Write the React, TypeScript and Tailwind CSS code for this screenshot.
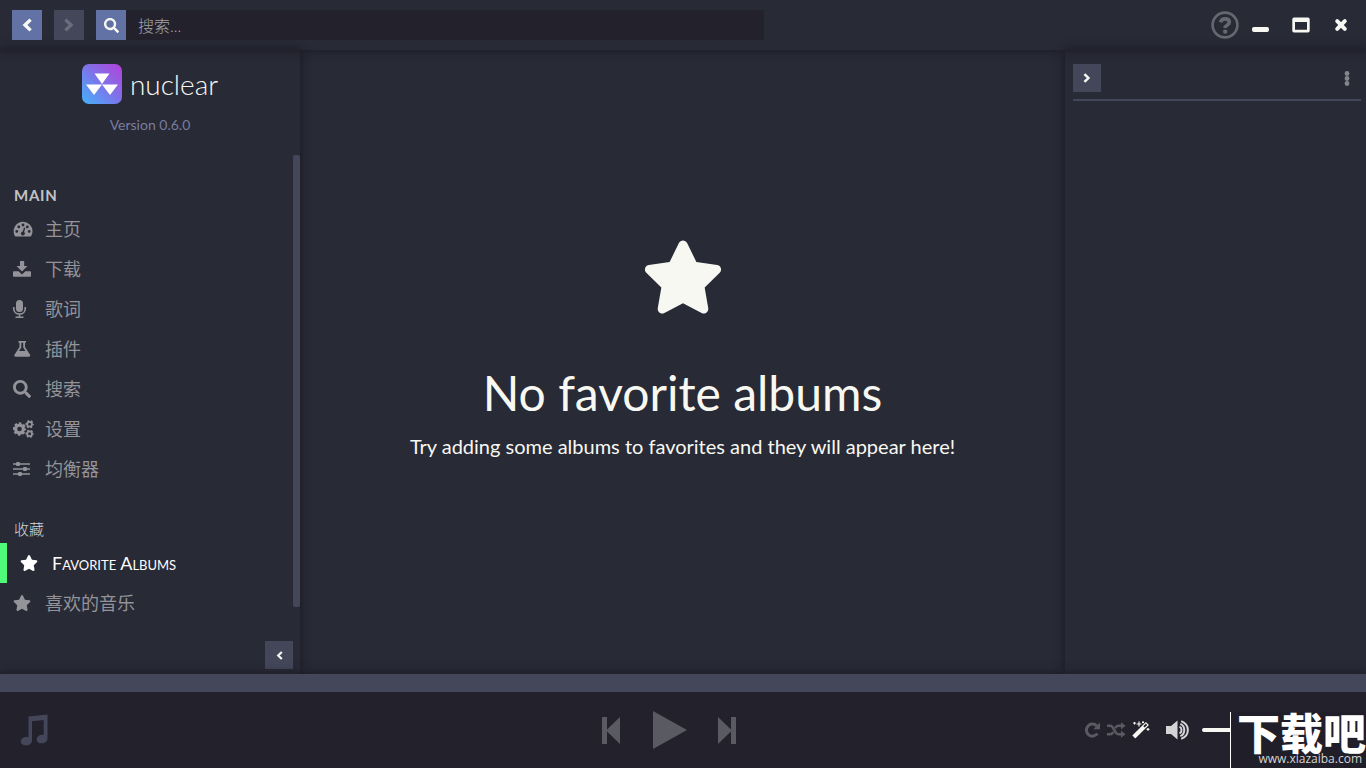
import React from 'react';
import { FaSearch, FaStar } from 'react-icons/fa';

const mainLinks = [
  { label: '主页', icon: <DashboardIcon /> },
  { label: '下载', icon: <DownloadIcon /> },
  { label: '歌词', icon: <MicrophoneIcon /> },
  { label: '插件', icon: <FlaskIcon /> },
  { label: '搜索', icon: <FaSearch size={18} /> },
  { label: '设置', icon: <CogsIcon /> },
  { label: '均衡器', icon: <SlidersIcon /> },
];

export default function App() {
  return (
    <div className="flex min-h-screen flex-col bg-[#282a36] font-['Lato','Noto_Sans_CJK_SC',sans-serif] text-[#f8f8f2]">
      <TopBar />
      <div className="flex flex-1">
        <Sidebar />
        <EmptyFavorites />
        <QueuePanel />
      </div>
      <Player />
    </div>
  );
}

function TopBar() {
  return (
    <header className="relative z-20 flex h-[50px] items-center pr-[15px] pl-3 shadow-[0_0_8px_1px_#1c1b25]">
      <button aria-label="Back" className="flex size-[30px] items-center justify-center bg-[#6272a4]">
        <Chevron direction="left" size={14} />
      </button>
      <button aria-label="Forward" disabled className="ml-3 flex size-[30px] items-center justify-center bg-[#44475a] text-[#6b6d7a]">
        <Chevron direction="right" size={14} />
      </button>
      <form className="ml-3 flex w-[668px]">
        <button type="button" aria-label="Search" className="flex size-[30px] shrink-0 items-center justify-center bg-[#6272a4]">
          <FaSearch size={15} />
        </button>
        <input
          type="text"
          aria-label="搜索"
          placeholder="搜索..."
          className="h-[30px] min-w-0 flex-1 bg-[#22212c] px-3 text-base font-light placeholder:text-[#a3a3a8] focus:outline-none"
        />
      </form>

      <div className="ml-auto flex items-center">
        <button aria-label="Help" className="text-[#66676f]">
          <svg width="28" height="28" viewBox="0 0 28 28" fill="none" stroke="currentColor">
            <circle cx="14" cy="14" r="12.4" strokeWidth="2.6" />
            <path d="M9.600 11.400c.5-2.300 2.100-3.500 4.500-3.500 2.500 0 4.200 1.200 4.200 3.300 0 3-4.100 2.700-4.100 5.700" strokeWidth="3.600" />
            <circle cx="14.200" cy="20.600" r="2.200" fill="currentColor" stroke="none" />
          </svg>
        </button>
        <button aria-label="Minimize" className="ml-3 flex w-5 justify-center">
          <svg width="18" height="16" viewBox="0 0 18 16" fill="currentColor">
            <rect x="0" y="10" width="17" height="5" rx="2" />
          </svg>
        </button>
        <button aria-label="Maximize" className="ml-5 flex w-5 justify-center">
          <svg width="18" height="16" viewBox="0 0 18 16" fill="currentColor" fillRule="evenodd">
            <path d="M2 .5h14A1.7 1.7 0 0 1 17.700 2.200v11.600a1.700 1.700 0 0 1-1.700 1.700H2a1.700 1.700 0 0 1-1.700-1.700V2.200A1.700 1.700 0 0 1 2 .5ZM3 5v7.700h12V5Z" />
          </svg>
        </button>
        <button aria-label="Close" className="ml-5 flex w-5 justify-center">
          <svg width="14" height="14" viewBox="0 0 14 14" fill="none" stroke="currentColor" strokeWidth="4" strokeLinecap="round">
            <path d="m3.200 3.200 7.600 7.600M10.800 3.200l-7.600 7.600" />
          </svg>
        </button>
      </div>
    </header>
  );
}

function Sidebar() {
  return (
    <aside className="flex w-[300px] shrink-0 flex-col shadow-[0_0_8px_1px_#1c1b25]">
      <div className="flex items-center justify-center gap-2 pt-3.5">
        <LogoMark />
        <span className="text-[28px]/[40px] font-light">nuclear</span>
      </div>
      <p className="mt-2.5 text-center text-sm/[22px] text-[#7a7c9e]">Version 0.6.0</p>

      <div className="mt-[19px] flex flex-1">
        <nav className="flex-1 pt-[30px]">
          <h2 className="px-3.5 text-[15px]/[20px] font-bold tracking-wider text-[#c3c3c6]">MAIN</h2>
          <ul className="mt-1">
            {mainLinks.map((link) => (
              <SidebarItem key={link.label} icon={link.icon} label={link.label} />
            ))}
          </ul>
          <h2 className="mt-[30px] px-3.5 text-[15px]/[20px] font-light text-[#d6d6d6]">收藏</h2>
          <ul className="mt-1">
            <SidebarItem icon={<FaStar size={18} />} label="Favorite Albums" active />
            <SidebarItem icon={<FaStar size={18} />} label="喜欢的音乐" />
          </ul>
        </nav>
        <div className="mb-4 w-[7px] rounded-xs bg-[#44475a]" />
      </div>

      <div className="flex justify-end pt-[18px] pr-[7px] pb-[5px]">
        <button aria-label="Collapse sidebar" className="flex size-7 items-center justify-center bg-[#44475a]">
          <Chevron direction="left" size={9} />
        </button>
      </div>
    </aside>
  );
}

function SidebarItem({ icon, label, active = false }: { icon: React.ReactNode; label: string; active?: boolean }) {
  return (
    <li>
      <a
        href="#"
        className={`flex h-10 items-center pl-[13px] text-lg [font-variant:small-caps] ${
          active ? 'border-l-7 border-[#50fa7b] text-white' : 'text-[#939399]'
        }`}
      >
        <span className="flex w-8 items-center">{icon}</span>
        {label}
      </a>
    </li>
  );
}

function EmptyFavorites() {
  return (
    <main className="flex flex-1 flex-col items-center justify-center pb-7 text-center">
      <FaStar size={82} />
      <h1 className="mt-12 text-5xl/[54px]">No favorite albums</h1>
      <p className="mt-3 text-xl">Try adding some albums to favorites and they will appear here!</p>
    </main>
  );
}

function QueuePanel() {
  return (
    <aside className="w-[301px] shrink-0 pt-3.5 pr-[5px] pl-2 shadow-[0_0_8px_1px_#1c1b25]">
      <div className="flex items-center justify-between border-b-2 border-[#44475a] pb-[7px]">
        <button aria-label="Collapse queue" className="flex size-7 items-center justify-center bg-[#44475a]">
          <Chevron direction="right" size={10} />
        </button>
        <button aria-label="Queue menu" className="flex size-7 items-center justify-center text-[#85868c]">
          <svg width="6" height="16" viewBox="0 0 6 16" fill="currentColor">
            <circle cx="3" cy="3.500" r="2.400" />
            <circle cx="3" cy="8.500" r="2.400" />
            <circle cx="3" cy="13.500" r="2.400" />
          </svg>
        </button>
      </div>
    </aside>
  );
}

function Player() {
  return (
    <footer className="relative z-20 bg-[#22212c] shadow-[0_0_8px_1px_#1c1b25]">
      <div className="h-[18px] bg-[#44475a]" />
      <div className="grid h-[76px] grid-cols-[1fr_auto_1fr]">
        <div className="flex items-center pl-5 text-[#44475a]">
          <svg width="28" height="32" viewBox="0 0 28 32" fill="currentColor" fillRule="evenodd">
            <path d="M8.500 2.500 27.500.5V24.500c0 3-2.500 4.800-5.600 4.800-3 0-5.200-1.400-5.200-3.900 0-2.700 2.700-4.700 5.600-4.700.6 0 1 .1 1.400.2V6L12 7.200v19.300c0 3-2.700 4.900-5.900 4.900C3.200 31.400.8 30 .8 27.500c0-2.600 2.600-4.600 5.600-4.600.8 0 1.500.1 2.100.3Z" />
          </svg>
        </div>

        <div className="flex items-center gap-[31px] pr-7 text-[#5a5a63]">
          <button aria-label="Previous">
            <svg width="18" height="27" viewBox="0 0 18 27" fill="currentColor">
              <path d="M0 0h5v12.500L18 0v27L5 14.500V27H0Z" />
            </svg>
          </button>
          <button aria-label="Play">
            <svg width="36" height="38" viewBox="0 0 36 38" fill="currentColor">
              <path d="M2 0 36 19 2 38Z" />
            </svg>
          </button>
          <button aria-label="Next">
            <svg width="18" height="27" viewBox="0 0 18 27" fill="currentColor">
              <path d="M18 0h-5v12.500L0 0v27L13 14.500V27h5Z" />
            </svg>
          </button>
        </div>

        <div className="flex items-center justify-end">
          <div className="flex items-center gap-1.5 text-[#5a5a63]">
            <button aria-label="Repeat"><RepeatIcon /></button>
            <button aria-label="Shuffle"><ShuffleIcon /></button>
            <button aria-label="Autoradio" className="text-[#f8f8f2]"><WandIcon /></button>
          </div>
          <button aria-label="Mute" className="ml-4 text-[#d5d5d5]">
            <VolumeIcon />
          </button>
          <input
            type="range"
            aria-label="Volume"
            defaultValue={100}
            className="ml-3 h-1 w-7 appearance-none rounded-l-full bg-[#f8f8f2] [&::-webkit-slider-thumb]:size-1 [&::-webkit-slider-thumb]:appearance-none"
          />
          <Watermark />
        </div>
      </div>
    </footer>
  );
}

function Watermark() {
  return (
    <div className="flex w-[136px] flex-col items-end self-end border-l border-white bg-[#1f1e29] text-white">
      <span className="font-['Noto_Sans_CJK_SC',sans-serif] text-[43px]/[38px] font-black">下载吧</span>
      <span className="pr-1 font-['Open_Sans',sans-serif] text-xs/[18px] text-[#d5d5d5]">www.xiazaiba.com</span>
    </div>
  );
}

function LogoMark() {
  return (
    <svg width="40" height="40" viewBox="0 0 40 40">
      <defs>
        <linearGradient id="logoFill" x1="0" y1="1" x2="1" y2="0">
          <stop offset="0" stopColor="#45b3fb" />
          <stop offset="0.5" stopColor="#7c75ea" />
          <stop offset="1" stopColor="#b53fd9" />
        </linearGradient>
      </defs>
      <rect width="40" height="40" rx="7" fill="url(#logoFill)" />
      <path d="M12.500 9.500h15L20 20ZM4 20.500h16l-8 10.500ZM20 20.500h16l-8 10.500Z" fill="#fff" />
    </svg>
  );
}

/* Icons */

function Chevron({ direction, size }: { direction: 'left' | 'right'; size: number }) {
  return (
    <svg width={size} height={size} viewBox="0 0 14 14" fill="none" stroke="currentColor" strokeWidth="3.400">
      <path d={direction === 'left' ? 'M10.600 1.600 5 7l5.600 5.400' : 'M3.400 1.600 9 7l-5.600 5.400'} />
    </svg>
  );
}

function DashboardIcon() {
  return (
    <svg width="20" height="16" viewBox="0 0 20 16" fill="currentColor">
      <path
        fillRule="evenodd"
        d="M10 .8a9.500 9.500 0 0 1 9.500 9.500c0 1.700-.5 3.300-1.300 4.600-.2.300-.5.500-.8.500H2.600c-.3 0-.6-.2-.8-.5A9.500 9.500 0 0 1 10 .8ZM3.800 9a1.400 1.400 0 1 0 0 2.800 1.400 1.400 0 0 0 0-2.800Zm2-4.500a1.400 1.400 0 1 0 0 2.800 1.400 1.400 0 0 0 0-2.800ZM10 2.600a1.400 1.400 0 1 0 0 2.800 1.400 1.400 0 0 0 0-2.800Zm4.300 1.900a1.400 1.400 0 1 0 0 2.800 1.400 1.400 0 0 0 0-2.800ZM16.200 9a1.400 1.400 0 1 0 0 2.800 1.400 1.400 0 0 0 0-2.800ZM11 6.600l-1.200 3.900a2 2 0 1 0 1.300.4l1.200-3.900Z"
      />
    </svg>
  );
}

function DownloadIcon() {
  return (
    <svg width="18" height="18" viewBox="0 0 18 18" fill="currentColor">
      <path d="M7 1h4.200v5h3.300L9 11.600 3.500 6H7Z" />
      <path d="M1 11.200h4.600L9 14.400l3.400-3.200H17c.6 0 1 .4 1 1v3.600c0 .6-.4 1-1 1H1c-.6 0-1-.4-1-1v-3.600c0-.6.4-1 1-1Z" />
    </svg>
  );
}

function MicrophoneIcon() {
  return (
    <svg width="13" height="18" viewBox="0 0 13 18" fill="none" stroke="currentColor">
      <rect x="3" y="0" width="7" height="12" rx="3.500" fill="currentColor" stroke="none" />
      <path d="M.8 7v2c0 3 2.500 5 5.700 5s5.700-2 5.700-5V7M6.500 14v3M2.500 17.200h8" strokeWidth="1.600" />
    </svg>
  );
}

function FlaskIcon() {
  return (
    <svg width="18" height="18" viewBox="0 0 18 18" fill="currentColor">
      <path
        fillRule="evenodd"
        d="M5.500 1h7.500v1.800h-1v4.100l4.900 7.600c.8 1.200.2 2.300-1.200 2.300H2.800c-1.400 0-2-1.100-1.200-2.300l4.900-7.600V2.800h-1ZM8.300 2.800v4.700l-2.300 3.600h6.500l-2.300-3.600V2.800Z"
      />
    </svg>
  );
}

function CogsIcon() {
  return (
    <svg width="22" height="18" viewBox="0 0 22 18" fill="none" stroke="currentColor">
      <circle cx="6.500" cy="9" r="3.900" strokeWidth="3.200" />
      <circle cx="6.500" cy="9" r="5.700" strokeWidth="2" strokeDasharray="2.600 1.877" strokeDashoffset="1.300" />
      <circle cx="16.600" cy="4.200" r="2.400" strokeWidth="1.800" />
      <circle cx="16.600" cy="4.200" r="3.500" strokeWidth="1.400" strokeDasharray="1.900 1.765" strokeDashoffset=".9" />
      <circle cx="16.600" cy="13.800" r="2.400" strokeWidth="1.800" />
      <circle cx="16.600" cy="13.800" r="3.500" strokeWidth="1.400" strokeDasharray="1.900 1.765" strokeDashoffset=".9" />
    </svg>
  );
}

function SlidersIcon() {
  return (
    <svg width="18" height="18" viewBox="0 0 18 18" fill="currentColor">
      <path d="M0 3.200h17v1.600H0ZM0 8.200h17v1.600H0ZM0 13.200h17v1.600H0Z" />
      <rect x="3" y="2" width="4" height="4" rx="1.200" />
      <rect x="10" y="7" width="4" height="4" rx="1.200" />
      <rect x="5" y="12" width="4" height="4" rx="1.200" />
    </svg>
  );
}

function RepeatIcon() {
  return (
    <svg width="17" height="18" viewBox="0 0 17 18" fill="none" stroke="currentColor">
      <path d="M12.800 5A6 6 0 1 0 13.400 12.500" strokeWidth="3" />
      <path d="M16 1.500v6.800H9.200Z" fill="currentColor" stroke="none" />
    </svg>
  );
}

function ShuffleIcon() {
  return (
    <svg width="19" height="18" viewBox="0 0 19 18" fill="none" stroke="currentColor" strokeWidth="2.600">
      <path d="M0 4.800h3.500c3 0 4.600 8.400 7.600 8.400H15M0 13.200h3.500c1.200 0 2-1 2.800-2.400M8.300 7.200c.8-1.400 1.600-2.400 2.800-2.400H15" />
      <path d="M14 1.200 18.500 4.800 14 8.400ZM14 9.600l4.500 3.600-4.500 3.600Z" fill="currentColor" stroke="none" />
    </svg>
  );
}

function WandIcon() {
  return (
    <svg width="18" height="18" viewBox="0 0 18 18" fill="none" stroke="currentColor">
      <path d="M1.800 16 15.400 2.400" strokeWidth="4.200" />
      <path d="m11.300 5.200 1.300 1.300 2.600-2.600-1.300-1.300Z" fill="#22212c" stroke="none" />
      <path d="M2.500 1v2.400M1.300 2.200h2.400M7 .6v4.800M4.600 3h4.800M11 .3v2M10 1.300h2M16 7v2.800M14.600 8.400h2.800" strokeWidth="1.200" />
    </svg>
  );
}

function VolumeIcon() {
  return (
    <svg width="24" height="20" viewBox="0 0 24 20" fill="none" stroke="currentColor">
      <path d="M0 6h5l6.500-5.500v19L5 14H0Z" fill="currentColor" stroke="none" />
      <path d="M13.500 6.700c2.700 1.200 2.700 5.400 0 6.600M14.300 3.800c5.300 2.200 5.300 10.200 0 12.400M15.200 1.100c8.900 3.500 8.900 14.300 0 17.800" strokeWidth="2" />
    </svg>
  );
}
